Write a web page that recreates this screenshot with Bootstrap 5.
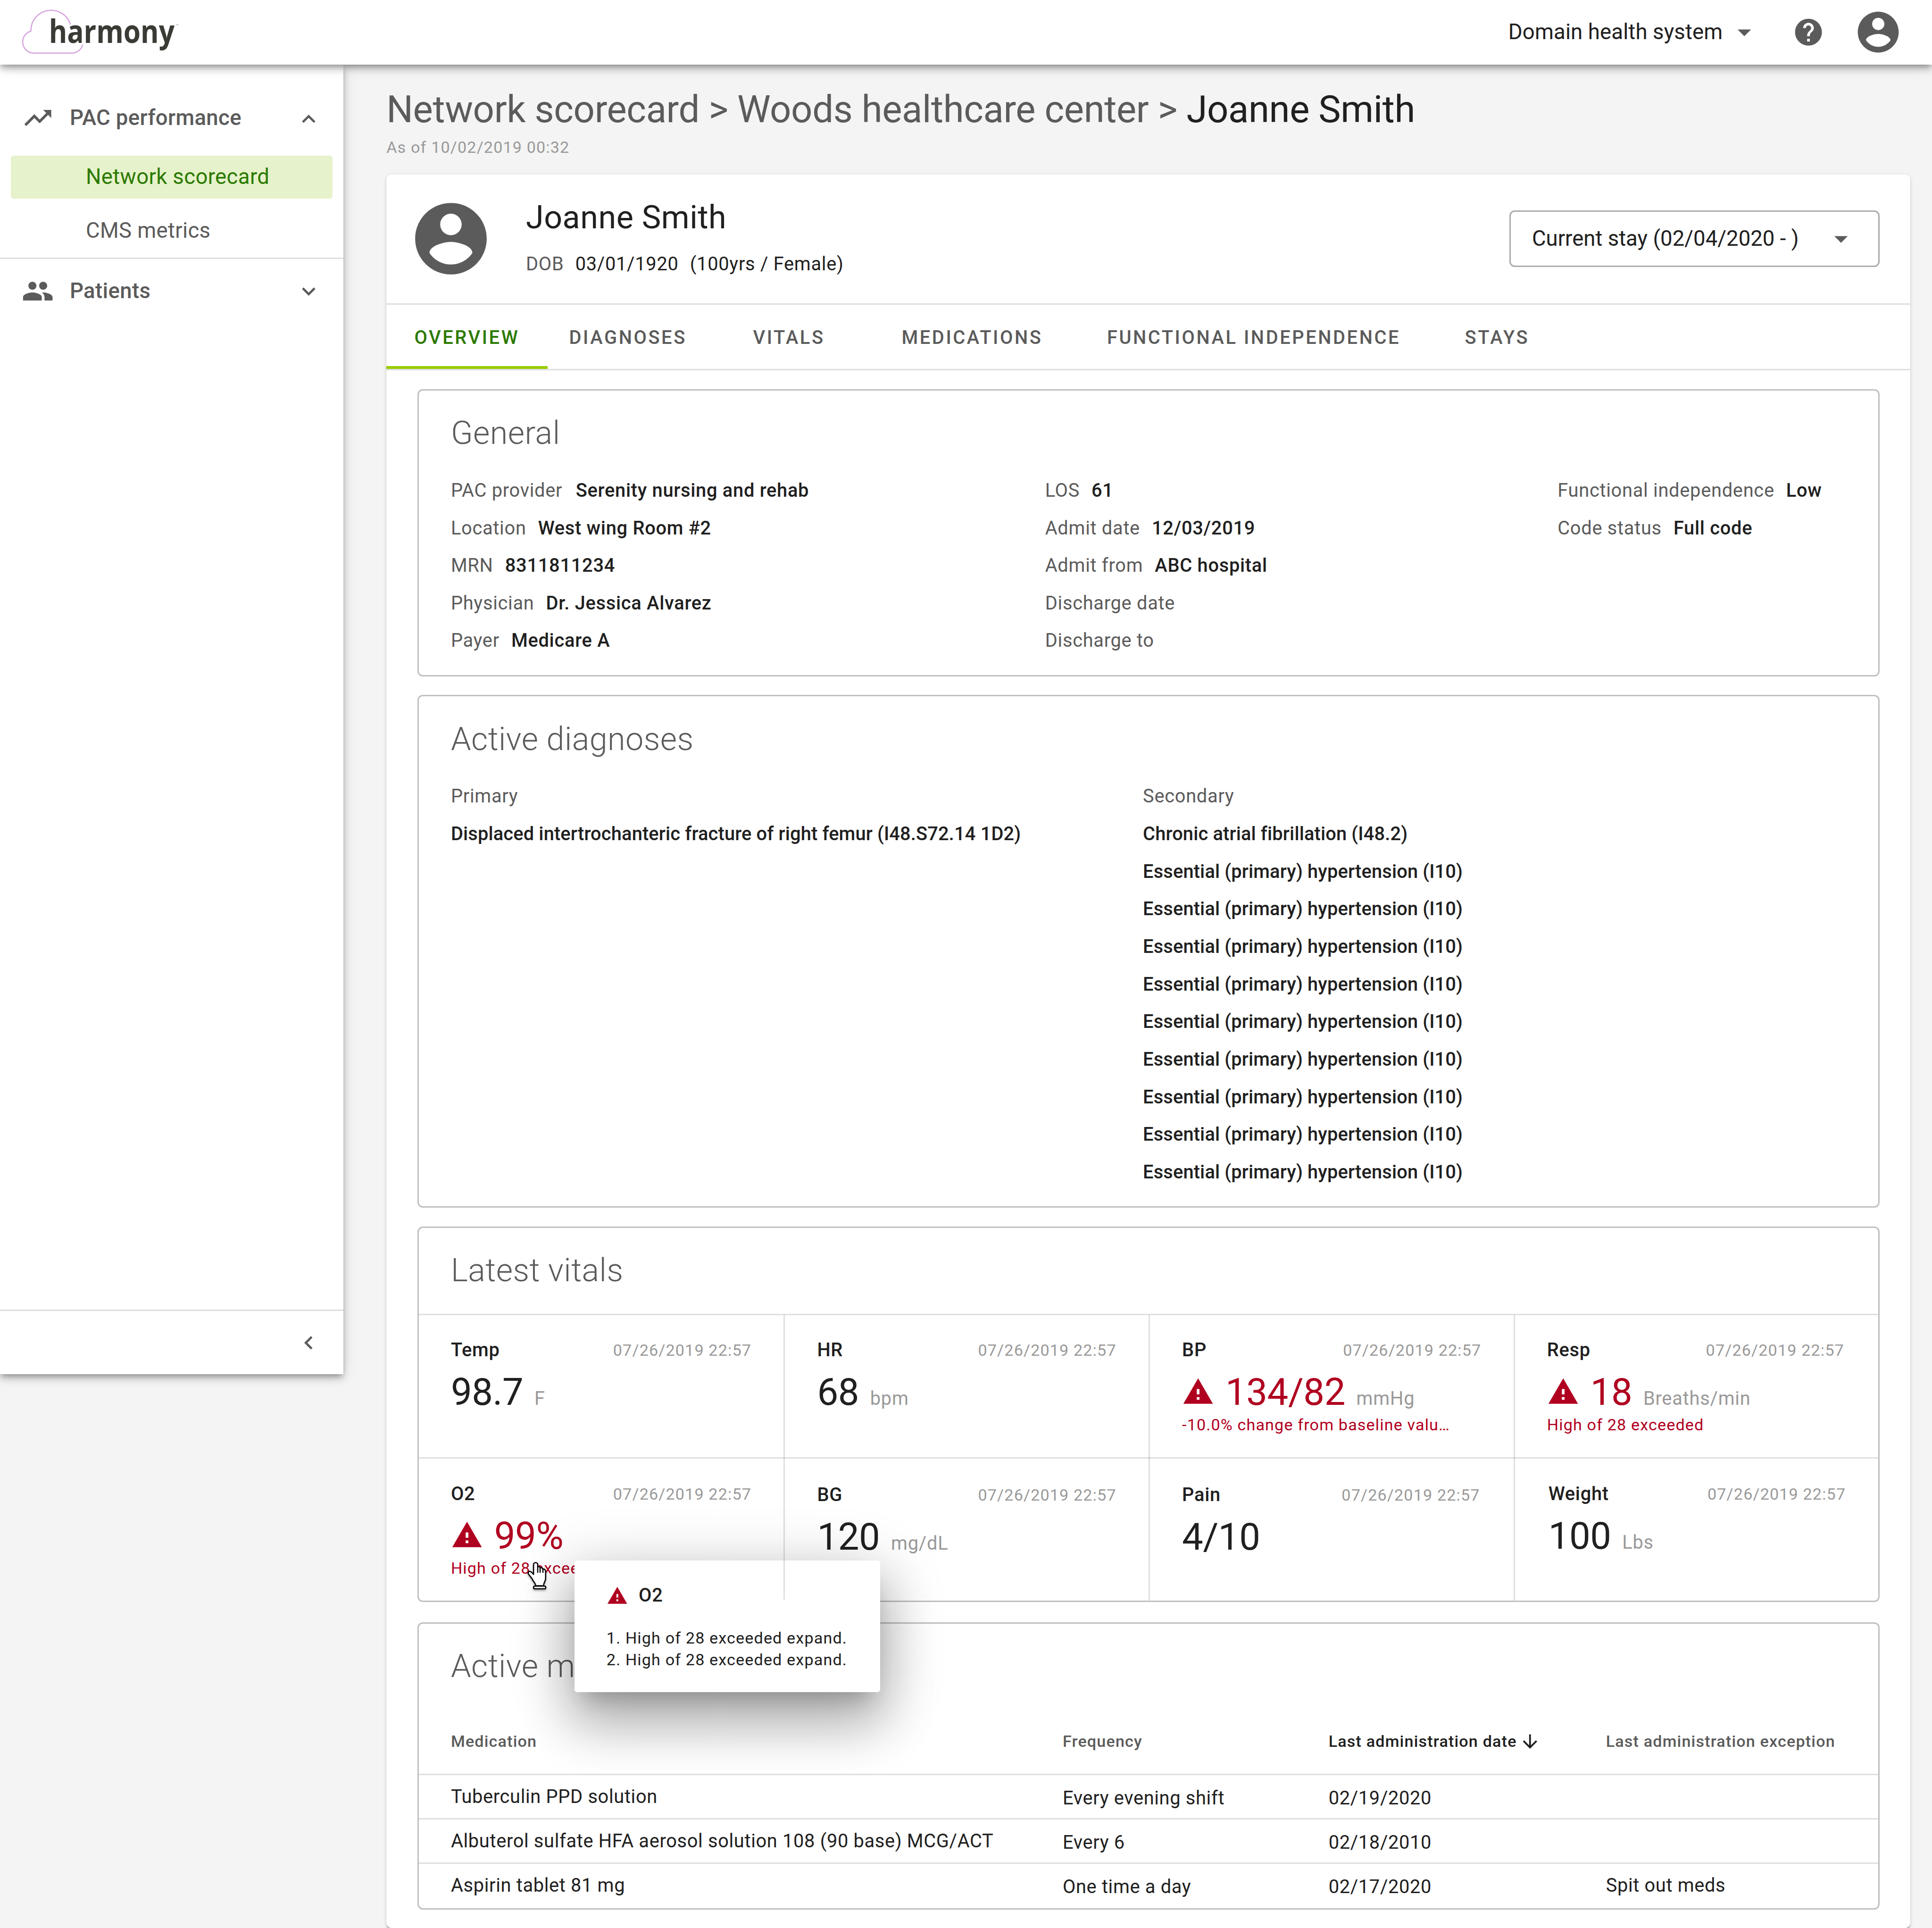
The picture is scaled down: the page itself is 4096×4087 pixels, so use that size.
<!DOCTYPE html>
<html lang="en">
<head>
<meta charset="utf-8">
<meta name="viewport" content="width=device-width, initial-scale=1">
<title>Harmony – Joanne Smith</title>
<link href="https://cdn.jsdelivr.net/npm/bootstrap@5.3.0/dist/css/bootstrap.min.css" rel="stylesheet">
<style>
/* 0.1rem is one layout unit; the page is 1440 units wide */
html { font-size: 28.4444px; }
body {
  font-family: Roboto, "Liberation Sans", sans-serif;
  font-size: 1.4rem; line-height: 2rem; letter-spacing: .025rem;
  color: #202020; background: #f4f4f4;
  height: 143.7rem; overflow: hidden;
}
.ink-soft { color: #5b5b5b; }
.ink-faint { color: #999; }
.ink-alert { color: #b00020; }
.ink-strong { color: #202020 !important; }
.fw-medium5 { font-weight: 500; }
.ico { display: block; flex: none; fill: currentColor; width: 2.4rem; height: 2.4rem; }
.ico-20 { width: 2rem; height: 2rem; }
.ico-16 { width: 1.6rem; height: 1.6rem; }
.ico-36 { width: 3.66rem; height: 3.66rem; }
.ico-64 { width: 6.4rem; height: 6.4rem; }
.hairline { border-bottom: 3px solid #dfdfdf; }

/* top bar */
.topbar {
  height: 4.8rem; padding: 0 2.17rem 0 1.5rem; background: #fff; position: relative; z-index: 10;
  box-shadow: 0 .2rem .4rem -.1rem rgba(0,0,0,.3), 0 .4rem .5rem 0 rgba(0,0,0,.16), 0 .1rem 1rem 0 rgba(0,0,0,.14);
}
.logo { height: 4.8rem; width: 12.2rem; display: block; overflow: visible; }
.picker { font-size: 1.6rem; letter-spacing: .005rem; }
.domain { gap: .4rem; margin-right: 2.4rem; }
.help { margin-right: 2.17rem; }

/* side navigation */
.sidenav {
  width: 25.6rem; height: 97.6rem; background: #fff; flex: none; padding-top: 1.6rem;
  font-size: 1.6rem; letter-spacing: .013rem;
  box-shadow: 0 .2rem .4rem -.1rem rgba(0,0,0,.3), 0 .4rem .5rem 0 rgba(0,0,0,.14), 0 .1rem 1rem 0 rgba(0,0,0,.14);
}
.nav-group { height: 4.8rem; padding: 0 1.6rem; gap: 1.2rem; }
.chev-up { margin-top: .16rem; }
.nav-sub { height: 3.2rem; margin: .4rem .8rem; padding: 0 0 0 5.6rem; border-radius: .2rem; }
.nav-sub.is-current { background: #e6f2cb; color: #2c7a00; }
.nav-foot { height: 4.8rem; border-top: 3px solid #dfdfdf; padding: 0 1.6rem; }

/* page heading */
.content { margin-left: 3.2rem; width: 113.6rem; padding-top: 1.56rem; }
.trail { font-size: 2.8rem; line-height: 3.6rem; letter-spacing: -.0132rem; font-weight: 400; margin: 0; white-space: nowrap; }
.trail b { font-weight: 400; color: #202020; }
.stamp { font-size: 1.2rem; line-height: 1.6rem; letter-spacing: .04rem; }
.asof { margin: .23rem 0 1.21rem; }

.sheet {
  background: #fff; border-radius: .4rem; height: 130.7rem;
  box-shadow: 0 .2rem .1rem -.1rem rgba(0,0,0,.2), 0 .1rem .1rem 0 rgba(0,0,0,.14), 0 .1rem .3rem 0 rgba(0,0,0,.12);
}
.profile { height: 9.7rem; padding: 0 2.3rem 0 1.6rem; }
.who { margin-left: 2.4rem; padding-bottom: .26rem; }
.who h2 { font-size: 2.4rem; line-height: 3.2rem; letter-spacing: .018rem; font-weight: 400; margin: 0 0 .87rem; }
.who-line { gap: .85rem; white-space: nowrap; }
.stay { width: 27.6rem; height: 4.2rem; border: 3px solid #ababab; border-radius: .4rem; padding: 0 1.58rem; color: #202020; letter-spacing: .001rem; }

.tabbar { height: 4.9rem; }
.tabbar .tab {
  padding: 1.48rem 2.4rem 0; font-weight: 500; letter-spacing: .125rem; color: #5b5b5b;
  text-align: center; white-space: nowrap; height: 4.8rem;
}
.tabbar .tab-fix { width: 12rem; padding-left: 0; padding-right: 0; }
.tabbar .tab.is-current { color: #2c7a00; border-bottom: 6px solid #9c0; }

/* panels */
.panel { border: 3px solid #c0c0c0; border-radius: .4rem; margin: 1.4rem 2.3rem 0; }
.panel h3 { font-size: 2.4rem; line-height: 3.2rem; font-weight: 300; letter-spacing: .016rem; color: #5b5b5b; margin: 0; padding: 1.6rem 2.4rem 0; }
.facts { margin: 1.25rem 0 0 2.4rem; line-height: 2.8rem; white-space: nowrap; }
.facts > div { flex: none; }
.fact { display: flex; gap: .88rem; color: #5b5b5b; }
.fact b { font-weight: 500; color: #202020; }
.fact-wide { gap: 1rem; }
.p-general { height: 21.4rem; }
.w-a { width: 44.29rem; } .w-b { width: 38.2rem; } .w-c { width: 51.58rem; }
.p-diag { height: 38.2rem; }
.dx { font-weight: 500; letter-spacing: .005rem; }

/* vitals */
.p-vitals { height: 28rem; }
.p-vitals h3 { height: 6.5rem; }
.line-b { border-bottom: 3px solid #dfdfdf; }
.cells { display: grid; grid-template-columns: 27.3rem 27.2rem 27.2rem auto; grid-template-rows: 10.7rem 10.6rem; }
.cell { position: relative; padding: 1.64rem 2.5rem 0 2.4rem; }
.cell:nth-child(-n+4) { border-bottom: 3px solid rgba(0,0,0,.125); }
.cell:not(:nth-child(4n))::after {
  content: ""; position: absolute; right: 0; top: 0; bottom: 0; width: 3px; background: rgba(0,0,0,.125);
}
.cell:nth-child(-n+3)::after { bottom: -3px !important; }
.cell:nth-child(5)::after { z-index: 6; bottom: .1rem !important; }
.cell:nth-child(4n) { padding-right: 2.54rem; }
.cell.low { padding-top: 1.74rem; }
.cell.inset-l { padding-left: 2.5rem; padding-right: 2.42rem; }
.cell.inset-r { padding-right: 2.6rem; }
.cell-top { display: flex; justify-content: space-between; line-height: 2rem; }
.cell-top .stamp { line-height: 2rem; }
.reading { font-size: 2.8rem; line-height: 3.3rem; height: 3.3rem; margin-top: .46rem; letter-spacing: -.015rem; gap: .83rem; white-space: nowrap; }
.reading small { font-size: 1.4rem; letter-spacing: .027rem; color: #999; }
.reading.ink-alert .ico { align-self: flex-start; margin-top: .41rem; }
.tip {
  position: absolute; z-index: 5; left: 11.6rem; top: 7.6rem; width: 22.8rem; height: 9.8rem;
  background: #fff; border-radius: .2rem; padding: 1.63rem 2.4rem 0;
  box-shadow: 0 1.1rem 1.5rem -.7rem rgba(0,0,0,.2), 0 2.4rem 3.8rem .3rem rgba(0,0,0,.2), 0 .9rem 4.6rem .4rem rgba(0,0,0,.2);
}
.tip-head { gap: .8rem; margin-bottom: 1.36rem; }
.hand { position: absolute; z-index: 7; left: 8.02rem; top: 7.58rem; width: 1.611rem; height: 2.333rem; overflow: visible; }

/* medications */
.p-meds { height: 21.4rem; margin-top: 1.5rem; }
.meds { width: 100%; table-layout: fixed; border-collapse: separate; border-spacing: 0; white-space: nowrap; }
.meds th { height: 6.5rem; padding: 3.2rem 0 0; vertical-align: top; font-size: 1.2rem; line-height: 1.6rem; letter-spacing: .041rem; font-weight: 500; color: #5b5b5b; border-bottom: 3px solid #dfdfdf; }
.meds td { height: 3.3rem; padding: .74rem 0 0; vertical-align: top; border-bottom: 3px solid #dfdfdf; letter-spacing: .023rem; }
.meds tr:last-child td { border-bottom: 0; }
.meds th:first-child, .meds td:first-child { padding-left: 2.4rem; }
.meds td:first-child, .meds td:last-child { padding-top: .63rem; }
.th-sort { gap: .2rem; }
.c1 { width: 48rem; } .c2 { width: 19.82rem; } .c3 { width: 20.67rem; }
</style>
</head>
<body>

<svg class="d-none" xmlns="http://www.w3.org/2000/svg">
  <symbol id="i-account" viewBox="0 0 24 24"><path d="M12 2C6.48 2 2 6.48 2 12s4.48 10 10 10 10-4.48 10-10S17.52 2 12 2zm0 3c1.66 0 3 1.34 3 3s-1.34 3-3 3-3-1.34-3-3 1.34-3 3-3zm0 14.2c-2.5 0-4.71-1.28-6-3.22.03-1.99 4-3.08 6-3.08 1.99 0 5.97 1.09 6 3.08-1.29 1.94-3.5 3.22-6 3.22z"/></symbol>
  <symbol id="i-help" viewBox="0 0 24 24"><path d="M12 2C6.48 2 2 6.48 2 12s4.48 10 10 10 10-4.48 10-10S17.52 2 12 2zm1 17h-2v-2h2v2zm2.07-7.75l-.9.92C13.45 12.9 13 13.5 13 15h-2v-.5c0-1.1.45-2.1 1.17-2.83l1.24-1.26c.37-.36.59-.86.59-1.41 0-1.1-.9-2-2-2s-2 .9-2 2H8c0-2.21 1.79-4 4-4s4 1.79 4 4c0 .88-.36 1.68-.93 2.25z"/></symbol>
  <symbol id="i-drop" viewBox="0 0 24 24"><path d="M7 10l5 5 5-5z"/></symbol>
  <symbol id="i-trend" viewBox="0 0 24 24"><path d="M16 6l2.29 2.29-4.88 4.88-4-4L2 16.59 3.41 18l6-6 4 4 6.3-6.29L22 12V6z"/></symbol>
  <symbol id="i-people" viewBox="0 0 24 24"><path d="M16 11c1.66 0 2.99-1.34 2.99-3S17.66 5 16 5c-1.66 0-3 1.34-3 3s1.34 3 3 3zm-8 0c1.66 0 2.99-1.34 2.99-3S9.66 5 8 5C6.34 5 5 6.34 5 8s1.34 3 3 3zm0 2c-2.33 0-7 1.17-7 3.5V19h14v-2.5c0-2.33-4.67-3.5-7-3.5zm8 0c-.29 0-.62.02-.97.05 1.16.84 1.97 1.97 1.97 3.45V19h6v-2.5c0-2.33-4.67-3.5-7-3.5z"/></symbol>
  <symbol id="i-up" viewBox="0 0 24 24"><path d="M12 8l-6 6 1.41 1.41L12 10.83l4.59 4.58L18 14z"/></symbol>
  <symbol id="i-down" viewBox="0 0 24 24"><path d="M16.59 8.59L12 13.17 7.41 8.59 6 10l6 6 6-6z"/></symbol>
  <symbol id="i-left" viewBox="0 0 24 24"><path d="M15.41 7.41L14 6l-6 6 6 6 1.41-1.41L10.83 12z"/></symbol>
  <symbol id="i-warn" viewBox="0 0 24 24"><path d="M1 21h22L12 2 1 21zm12-3h-2v-2h2v2zm0-4h-2v-4h2v4z"/></symbol>
  <symbol id="i-sort" viewBox="0 0 24 24"><path d="M20 12l-1.41-1.41L13 16.17V4h-2v12.17l-5.58-5.59L4 12l8 8 8-8z"/></symbol>
</svg>

<header class="topbar d-flex align-items-center">
  <!-- viewBox: nine units per layout unit, starting 15 units from the left edge -->
  <svg class="logo" viewBox="75 0 1098 432" role="img" aria-label="harmony">
    <path d="M412 165A136 136 0 0 0 146 209A75 75 0 0 0 160 356H420A76 76 0 0 0 494 299" fill="none" stroke="#d7a5df" stroke-width="8"/>
    <text transform="translate(267 288) scale(.867 1)" x="0" y="0" font-family="Open Sans, sans-serif" font-weight="700" font-size="214" letter-spacing="0" fill="#3b3b36">harmony</text>
    <text x="1119" y="171" font-family="Liberation Sans, sans-serif" font-size="12" letter-spacing="0" fill="#888">TM</text>
  </svg>
  <div class="picker domain d-flex align-items-center ms-auto"><span>Domain health system</span><svg class="ico ink-soft"><use href="#i-drop"/></svg></div>
  <svg class="ico ink-soft help"><use href="#i-help"/></svg>
  <svg class="ico ico-36 ink-soft"><use href="#i-account"/></svg>
</header>

<div class="d-flex align-items-start">
  <nav class="sidenav d-flex flex-column">
    <div class="nav-group d-flex align-items-center fw-medium5 ink-soft">
      <svg class="ico"><use href="#i-trend"/></svg><span>PAC performance</span><svg class="ico ico-20 ms-auto chev-up"><use href="#i-up"/></svg>
    </div>
    <div class="nav-sub is-current d-flex align-items-center">Network scorecard</div>
    <div class="nav-sub d-flex align-items-center ink-soft">CMS metrics</div>
    <div class="hairline"></div>
    <div class="nav-group d-flex align-items-center fw-medium5 ink-soft">
      <svg class="ico"><use href="#i-people"/></svg><span>Patients</span><svg class="ico ico-20 ms-auto"><use href="#i-down"/></svg>
    </div>
    <div class="nav-foot mt-auto d-flex align-items-center justify-content-end ink-soft">
      <svg class="ico ico-20"><use href="#i-left"/></svg>
    </div>
  </nav>

  <main class="content">
    <h1 class="trail ink-soft">Network scorecard &gt; Woods healthcare center &gt; <b>Joanne Smith</b></h1>
    <div class="asof stamp ink-faint">As of 10/02/2019 00:32</div>

    <section class="sheet">
      <div class="profile hairline d-flex align-items-center">
        <svg class="ico ico-64 ink-soft"><use href="#i-account"/></svg>
        <div class="who">
          <h2>Joanne Smith</h2>
          <div class="who-line d-flex"><span class="ink-soft">DOB</span><span>03/01/1920</span><span>(100yrs / Female)</span></div>
        </div>
        <div class="stay picker ms-auto d-flex align-items-center justify-content-between"><span>Current stay (02/04/2020 - )</span><svg class="ico ink-soft"><use href="#i-drop"/></svg></div>
      </div>

      <div class="tabbar hairline d-flex">
        <div class="tab tab-fix is-current">OVERVIEW</div>
        <div class="tab tab-fix">DIAGNOSES</div>
        <div class="tab tab-fix">VITALS</div>
        <div class="tab">MEDICATIONS</div>
        <div class="tab">FUNCTIONAL INDEPENDENCE</div>
        <div class="tab">STAYS</div>
      </div>

      <div class="panel p-general">
        <h3>General</h3>
        <div class="facts d-flex">
          <div class="w-a">
            <div class="fact fact-wide">PAC provider <b>Serenity nursing and rehab</b></div>
            <div class="fact">Location <b>West wing Room #2</b></div>
            <div class="fact">MRN <b>8311811234</b></div>
            <div class="fact">Physician <b>Dr. Jessica Alvarez</b></div>
            <div class="fact">Payer <b>Medicare A</b></div>
          </div>
          <div class="w-b">
            <div class="fact">LOS <b>61</b></div>
            <div class="fact">Admit date <b>12/03/2019</b></div>
            <div class="fact">Admit from <b>ABC hospital</b></div>
            <div class="fact">Discharge date</div>
            <div class="fact">Discharge to</div>
          </div>
          <div>
            <div class="fact">Functional independence <b>Low</b></div>
            <div class="fact">Code status <b>Full code</b></div>
          </div>
        </div>
      </div>

      <div class="panel p-diag">
        <h3>Active diagnoses</h3>
        <div class="facts d-flex">
          <div class="w-c">
            <div class="ink-soft">Primary</div>
            <div class="dx">Displaced intertrochanteric fracture of right femur (I48.S72.14 1D2)</div>
          </div>
          <div>
            <div class="ink-soft">Secondary</div>
            <div class="dx">Chronic atrial fibrillation (I48.2)</div>
            <div class="dx">Essential (primary) hypertension (I10)</div>
            <div class="dx">Essential (primary) hypertension (I10)</div>
            <div class="dx">Essential (primary) hypertension (I10)</div>
            <div class="dx">Essential (primary) hypertension (I10)</div>
            <div class="dx">Essential (primary) hypertension (I10)</div>
            <div class="dx">Essential (primary) hypertension (I10)</div>
            <div class="dx">Essential (primary) hypertension (I10)</div>
            <div class="dx">Essential (primary) hypertension (I10)</div>
            <div class="dx">Essential (primary) hypertension (I10)</div>
          </div>
        </div>
      </div>

      <div class="panel p-vitals">
        <h3 class="line-b">Latest vitals</h3>
        <div class="cells">
          <div class="cell">
            <div class="cell-top"><span class="fw-medium5">Temp</span><span class="stamp ink-faint">07/26/2019 22:57</span></div>
            <div class="reading d-flex align-items-baseline">98.7 <small>F</small></div>
          </div>
          <div class="cell">
            <div class="cell-top"><span class="fw-medium5">HR</span><span class="stamp ink-faint">07/26/2019 22:57</span></div>
            <div class="reading d-flex align-items-baseline">68 <small>bpm</small></div>
          </div>
          <div class="cell">
            <div class="cell-top"><span class="fw-medium5">BP</span><span class="stamp ink-faint">07/26/2019 22:57</span></div>
            <div class="reading ink-alert d-flex align-items-baseline"><svg class="ico"><use href="#i-warn"/></svg>134/82 <small>mmHg</small></div>
            <div class="stamp ink-alert">-10.0% change from baseline valu…</div>
          </div>
          <div class="cell">
            <div class="cell-top"><span class="fw-medium5">Resp</span><span class="stamp ink-faint">07/26/2019 22:57</span></div>
            <div class="reading ink-alert d-flex align-items-baseline"><svg class="ico"><use href="#i-warn"/></svg>18 <small>Breaths/min</small></div>
            <div class="stamp ink-alert">High of 28 exceeded</div>
          </div>
          <div class="cell">
            <div class="cell-top"><span class="fw-medium5">O2</span><span class="stamp ink-faint">07/26/2019 22:57</span></div>
            <div class="reading ink-alert d-flex align-items-baseline"><svg class="ico"><use href="#i-warn"/></svg>99%</div>
            <div class="stamp ink-alert">High of 28 exceeded</div>
            <div class="tip">
              <div class="tip-head d-flex align-items-center fw-medium5"><svg class="ico ico-16 ink-alert"><use href="#i-warn"/></svg>O2</div>
              <div class="stamp text-nowrap">1. High of 28 exceeded expand.</div>
              <div class="stamp text-nowrap">2. High of 28 exceeded expand.</div>
            </div>
            <svg class="hand" viewBox="50 85 145 210">
              <defs><filter id="soft" x="-30%" y="-30%" width="160%" height="170%"><feDropShadow dx="0" dy="9" stdDeviation="7" flood-color="#000" flood-opacity=".35"/></filter></defs>
              <g filter="url(#soft)" fill="#fff" stroke="#000" stroke-width="8" stroke-linejoin="round" stroke-linecap="round">
                <path d="M98 178V113a14 14 0 0 1 28 0v14c5-3 14-1 16 7 6-4 15-1 18 8 9-2 19 5 19 18v46c-1 20-14 28-14 48H112c1-17-16-28-26-50L64 176c-7-12 4-22 15-16 8 4 12 12 19 18z"/>
                <path d="M126 127v37M142 134v30M161 142v22" fill="none"/>
                <rect x="98" y="257" width="82" height="18" rx="8" fill="#eef3ee"/>
              </g>
            </svg>
          </div>
          <div class="cell low">
            <div class="cell-top"><span class="fw-medium5">BG</span><span class="stamp ink-faint">07/26/2019 22:57</span></div>
            <div class="reading d-flex align-items-baseline">120 <small>mg/dL</small></div>
          </div>
          <div class="cell low inset-r">
            <div class="cell-top"><span class="fw-medium5">Pain</span><span class="stamp ink-faint">07/26/2019 22:57</span></div>
            <div class="reading d-flex align-items-baseline">4/10</div>
          </div>
          <div class="cell inset-l">
            <div class="cell-top"><span class="fw-medium5">Weight</span><span class="stamp ink-faint">07/26/2019 22:57</span></div>
            <div class="reading d-flex align-items-baseline">100 <small>Lbs</small></div>
          </div>
        </div>
      </div>

      <div class="panel p-meds">
        <h3>Active medications</h3>
        <table class="meds">
          <colgroup><col class="c1"><col class="c2"><col class="c3"><col></colgroup>
          <thead>
            <tr><th>Medication</th><th>Frequency</th><th class="ink-strong"><div class="th-sort d-flex align-items-center">Last administration date<svg class="ico ico-16"><use href="#i-sort"/></svg></div></th><th>Last administration exception</th></tr>
          </thead>
          <tbody>
            <tr><td>Tuberculin PPD solution</td><td>Every evening shift</td><td>02/19/2020</td><td></td></tr>
            <tr><td>Albuterol sulfate HFA aerosol solution 108 (90 base) MCG/ACT</td><td>Every 6</td><td>02/18/2010</td><td></td></tr>
            <tr><td>Aspirin tablet 81 mg</td><td>One time a day</td><td>02/17/2020</td><td>Spit out meds</td></tr>
          </tbody>
        </table>
      </div>
    </section>
  </main>
</div>

<script src="https://cdn.jsdelivr.net/npm/bootstrap@5.3.0/dist/js/bootstrap.bundle.min.js"></script>
</body>
</html>
